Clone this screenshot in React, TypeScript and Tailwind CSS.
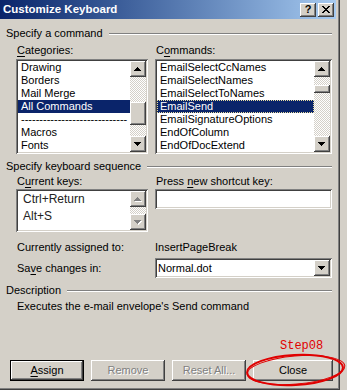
import type { ReactNode } from 'react';

const raised =
  'bg-[#d4d0c8] shadow-[inset_-1px_-1px_#404040,inset_1px_1px_#fff,inset_-2px_-2px_#808080]';
const sunken =
  'bg-white shadow-[inset_1px_1px_#808080,inset_-1px_-1px_#fff,inset_2px_2px_#404040,inset_-2px_-2px_#d4d0c8]';
const checker =
  'bg-[repeating-conic-gradient(#d4d0c8_0_25%,#ffffff_0_50%)] bg-[length:2px_2px]';

const Arrow = ({ dir, disabled }: { dir: 'up' | 'down'; disabled?: boolean }) => {
  const rows = dir === 'up' ? [3, 2, 1, 0] : [0, 1, 2, 3];
  const fill = disabled ? '#808080' : '#000';
  return (
    <svg width="8" height="5" viewBox="0 0 8 5" shapeRendering="crispEdges">
      {disabled &&
        rows.map((x, i) => (
          <rect key={`s${i}`} x={x + 1} y={i + 1} width={7 - x * 2} height={1} fill="#fff" />
        ))}
      {rows.map((x, i) => (
        <rect key={i} x={x} y={i} width={7 - x * 2} height={1} fill={fill} />
      ))}
    </svg>
  );
};

const ScrollButton = ({ dir, disabled }: { dir: 'up' | 'down'; disabled?: boolean }) => (
  <div className={`w-[16px] h-[16px] shrink-0 flex items-center justify-center ${raised}`}>
    <Arrow dir={dir} disabled={disabled} />
  </div>
);

// thumb gets a full class string like "mt-[25px] h-[23px]"
const ScrollBar = ({ thumb, disabled }: { thumb?: string; disabled?: boolean }) => (
  <div className="w-[16px] h-full flex flex-col shrink-0">
    <ScrollButton dir="up" disabled={disabled} />
    <div className={`flex-1 ${checker}`}>
      {thumb && <div className={`w-[16px] ${raised} ${thumb}`} />}
    </div>
    <ScrollButton dir="down" disabled={disabled} />
  </div>
);

const GroupHeader = ({ children, className }: { children: ReactNode; className: string }) => (
  <div className={`flex items-center h-[13px] pl-[6px] pr-[8px] ${className}`}>
    <span className="leading-[13px]">{children}</span>
    <div className="flex-1 ml-[6px] h-[2px] border-t border-t-[#808080] border-b border-b-white" />
  </div>
);

const U = ({ children }: { children: ReactNode }) => <span className="underline underline-offset-2">{children}</span>;

const categories = ['Drawing', 'Borders', 'Mail Merge', 'All Commands', '-----------------------------', 'Macros', 'Fonts'];
const commands = [
  'EmailSelectCcNames',
  'EmailSelectNames',
  'EmailSelectToNames',
  'EmailSend',
  'EmailSignatureOptions',
  'EndOfColumn',
  'EndOfDocExtend',
];

const Button = ({
  children,
  disabled,
  isDefault,
  width,
}: {
  children: ReactNode;
  disabled?: boolean;
  isDefault?: boolean;
  width: string;
}) => (
  <div className={`${width} h-[21px] ${isDefault ? 'border border-black' : ''}`}>
    <div
      className={`w-full h-full flex items-center justify-center ${raised} ${
        disabled ? 'text-[#808080] [text-shadow:1px_1px_#fff]' : ''
      }`}
    >
      {children}
    </div>
  </div>
);

export default function App() {
  return (
    <div className="relative w-[347px] h-[390px] overflow-hidden bg-[#d4d0c8] text-black text-[11px] font-['Liberation_Sans',Arial,sans-serif]">
      <div className="w-[340px] h-[390px] flex flex-col shadow-[inset_-1px_-1px_#404040,inset_-2px_-2px_#808080]">
        {/* title bar */}
        <div className="w-[336px] h-[19px] shrink-0 flex items-center justify-between pl-[3px] pr-[2px] bg-linear-to-r from-[#0a246a] to-[#a6caf0]">
          <span className="text-white font-bold text-[11.5px] leading-[13px]">Customize Keyboard</span>
          <div className="flex gap-[2px]">
            <div className={`w-[16px] h-[14px] flex items-center justify-center font-bold text-[11px] leading-none ${raised}`}>
              ?
            </div>
            <div className={`w-[16px] h-[14px] flex items-center justify-center ${raised}`}>
              <svg width="8" height="7" viewBox="0 0 8 7" shapeRendering="crispEdges">
                <path d="M0 0h2v1h-2zM6 0h2v1h-2zM1 1h2v1h-2zM5 1h2v1h-2zM2 2h4v1h-4zM3 3h2v1h-2zM2 4h4v1h-4zM1 5h2v1h-2zM5 5h2v1h-2zM0 6h2v1h-2zM6 6h2v1h-2z" fill="#000" />
              </svg>
            </div>
          </div>
        </div>

        <GroupHeader className="mt-[8px]">Specify a command</GroupHeader>

        <div className="flex pl-[16px] gap-[7px] mt-[4px] leading-[13px]">
          <div className="w-[132px] pl-[1px]">
            <U>C</U>ategories:
          </div>
          <div className="w-[177px] pl-[1px]">
            C<U>o</U>mmands:
          </div>
        </div>

        <div className="flex pl-[16px] gap-[7px] mt-[2px]">
          <div className={`w-[132px] h-[95px] p-[2px] flex ${sunken}`}>
            <div className="flex-1 overflow-hidden">
              {categories.map((c, i) => (
                <div
                  key={c}
                  className={`h-[13px] leading-[13px] pl-[3px] whitespace-nowrap ${
                    i === 3 ? 'bg-[#0a246a] text-white' : ''
                  }`}
                >
                  {c}
                </div>
              ))}
            </div>
            <ScrollBar thumb="mt-[25px] h-[23px]" />
          </div>
          <div className={`w-[177px] h-[95px] p-[2px] flex ${sunken}`}>
            <div className="flex-1 overflow-hidden">
              {commands.map((c, i) => (
                <div
                  key={c}
                  className={`h-[13px] leading-[11px] pl-[2px] whitespace-nowrap ${
                    i === 3 ? 'bg-[#0a246a] text-white border border-dotted border-[#e8dca0]' : 'border border-transparent'
                  }`}
                >
                  {c}
                </div>
              ))}
            </div>
            <ScrollBar thumb="mt-[8px] h-[8px]" />
          </div>
        </div>

        <GroupHeader className="mt-[6px]">Specify keyboard sequence</GroupHeader>

        <div className="flex pl-[16px] gap-[7px] mt-[2px] leading-[13px]">
          <div className="w-[132px] pl-[1px]">
            C<U>u</U>rrent keys:
          </div>
          <div className="w-[177px] pl-[1px]">
            Press <U>n</U>ew shortcut key:
          </div>
        </div>

        <div className="flex items-start pl-[16px] gap-[7px] mt-[1px]">
          <div className={`w-[132px] h-[43px] p-[2px] flex ${sunken}`}>
            <div className="flex-1 text-[12px] text-[#222] pl-[5px]">
              <div className="h-[17px] leading-[17px]">Ctrl+Return</div>
              <div className="h-[17px] leading-[17px]">Alt+S</div>
            </div>
            <ScrollBar disabled />
          </div>
          <div className={`w-[177px] h-[20px] ${sunken}`} />
        </div>

        <div className="flex pl-[16px] gap-[7px] mt-[9px] leading-[13px]">
          <div className="w-[132px] pl-[1px]">Currently assigned to:</div>
          <div className="w-[177px]">InsertPageBreak</div>
        </div>

        <div className="flex items-center pl-[16px] gap-[7px] mt-[4px]">
          <div className="w-[132px] pl-[1px] leading-[13px]">
            Sa<U>v</U>e changes in:
          </div>
          <div className={`w-[177px] h-[20px] p-[2px] flex items-center ${sunken}`}>
            <span className="flex-1 pl-[1px] leading-[13px]">Normal.dot</span>
            <ScrollButton dir="down" />
          </div>
        </div>

        <GroupHeader className="mt-[6px]">Description</GroupHeader>

        <div className="pl-[17px] mt-[3px] leading-[13px]">Executes the e-mail envelope's Send command</div>

        <div className="flex pl-[10px] gap-[7px] mt-[47px]">
          <Button width="w-[74px]" isDefault>
            <U>A</U>ssign
          </Button>
          <Button width="w-[74px]" disabled>
            Remove
          </Button>
          <Button width="w-[74px]" disabled>
            Reset All...
          </Button>
          <Button width="w-[80px]">Close</Button>
        </div>
      </div>

      {/* red annotation */}
      <span className="absolute left-[280px] top-[340px] text-[12px] leading-[13px] text-[#e00000] font-['Liberation_Mono',monospace]">
        Step08
      </span>
      <svg className="absolute left-[240px] top-[350px]" width="107" height="40" viewBox="0 0 107 40">
        <ellipse cx="55" cy="20" rx="48" ry="15" fill="none" stroke="#e00000" strokeWidth="2" transform="rotate(-3 55 20)" />
        <ellipse cx="56" cy="20" rx="49" ry="14" fill="none" stroke="#e00000" strokeWidth="1" transform="rotate(-5 56 20)" />
      </svg>
    </div>
  );
}
